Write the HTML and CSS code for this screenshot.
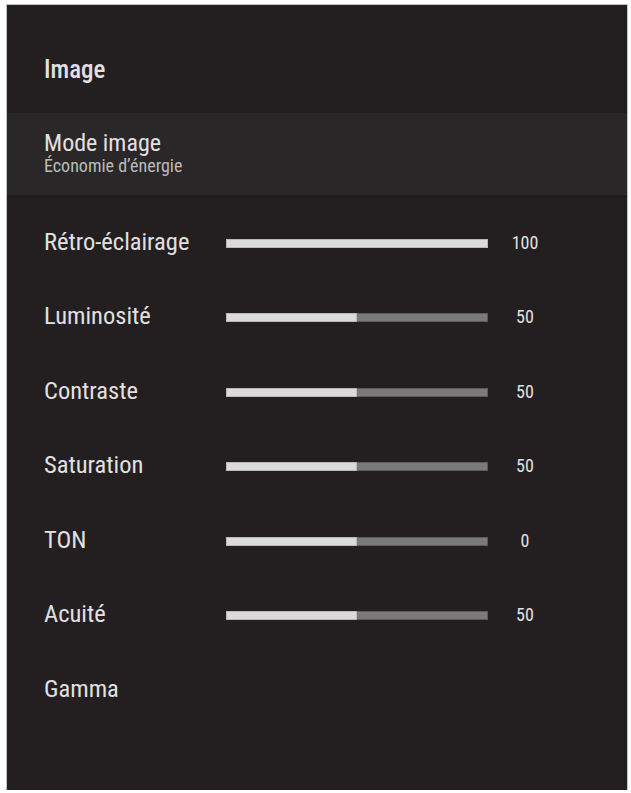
FILE: index.html
```html
<!DOCTYPE html>
<html lang="fr">
<head>
<meta charset="utf-8">
<title>Image</title>
<link rel="stylesheet" href="styles.css">
</head>
<body>
<div class="panel">
  <div class="header"><span class="title">Image</span></div>
  <div class="mode">
    <div class="mode-title">Mode image</div>
    <div class="mode-sub">Économie d’énergie</div>
  </div>
  <div class="list">
    <div class="row"><span class="label">Rétro-éclairage</span><div class="bar"><div class="fill" style="width:100%"></div></div><span class="value">100</span></div>
    <div class="row"><span class="label">Luminosité</span><div class="bar"><div class="fill" style="width:50%"></div></div><span class="value">50</span></div>
    <div class="row"><span class="label">Contraste</span><div class="bar"><div class="fill" style="width:50%"></div></div><span class="value">50</span></div>
    <div class="row"><span class="label">Saturation</span><div class="bar"><div class="fill" style="width:50%"></div></div><span class="value">50</span></div>
    <div class="row"><span class="label">TON</span><div class="bar"><div class="fill" style="width:50%"></div></div><span class="value">0</span></div>
    <div class="row"><span class="label">Acuité</span><div class="bar"><div class="fill" style="width:50%"></div></div><span class="value">50</span></div>
    <div class="row"><span class="label">Gamma</span></div>
  </div>
</div>
</body>
</html>
```
FILE: styles.css
```css
html, body {
  margin: 0;
  padding: 0;
  background: #ffffff;
}
body {
  font-family: "Liberation Sans Narrow", "Roboto Condensed", "DejaVu Sans Condensed", "Liberation Sans", sans-serif;
  color: #e2e0e1;
}
.panel {
  margin: 5px 4px 0 7px;
  width: 620px;
  height: 785px;
  background: #231f20;
  box-shadow: 0 0 0 1px #c4c4c4;
  box-sizing: border-box;
}
.header {
  height: 108px;
  padding: 20px 0 0 37px;
  box-sizing: border-box;
  display: flex;
  align-items: center;
}
.title {
  font-size: 25px;
  font-weight: 500;
}
.mode {
  height: 85px;
  background: #2a2728;
  padding: 0 0 2px 37px;
  box-sizing: border-box;
  display: flex;
  flex-direction: column;
  justify-content: center;
  border-bottom: 3px solid #1e1b1c;
}
.mode-title {
  font-size: 24px;
  line-height: 26px;
}
.mode-sub {
  font-size: 18px;
  line-height: 20px;
  color: #bdbbbc;
}
.list {
  margin-top: 6px;
}
.row {
  height: 74.5px;
  padding-left: 37px;
  display: grid;
  grid-template-columns: 182px 262px 74px;
  align-items: center;
}
.label {
  font-size: 24.5px;
}
.bar {
  height: 9px;
  margin-top: 4px;
  background: #7b7a7a;
  box-shadow: inset 0 0 0 1px rgba(0, 0, 0, 0.25);
  display: flex;
}
.fill {
  height: 100%;
  background: #dbdadb;
  box-shadow: inset 0 0 0 1px rgba(0, 0, 0, 0.15);
}
.value {
  font-size: 18px;
  text-align: center;
  margin-top: 2px;
}
```
